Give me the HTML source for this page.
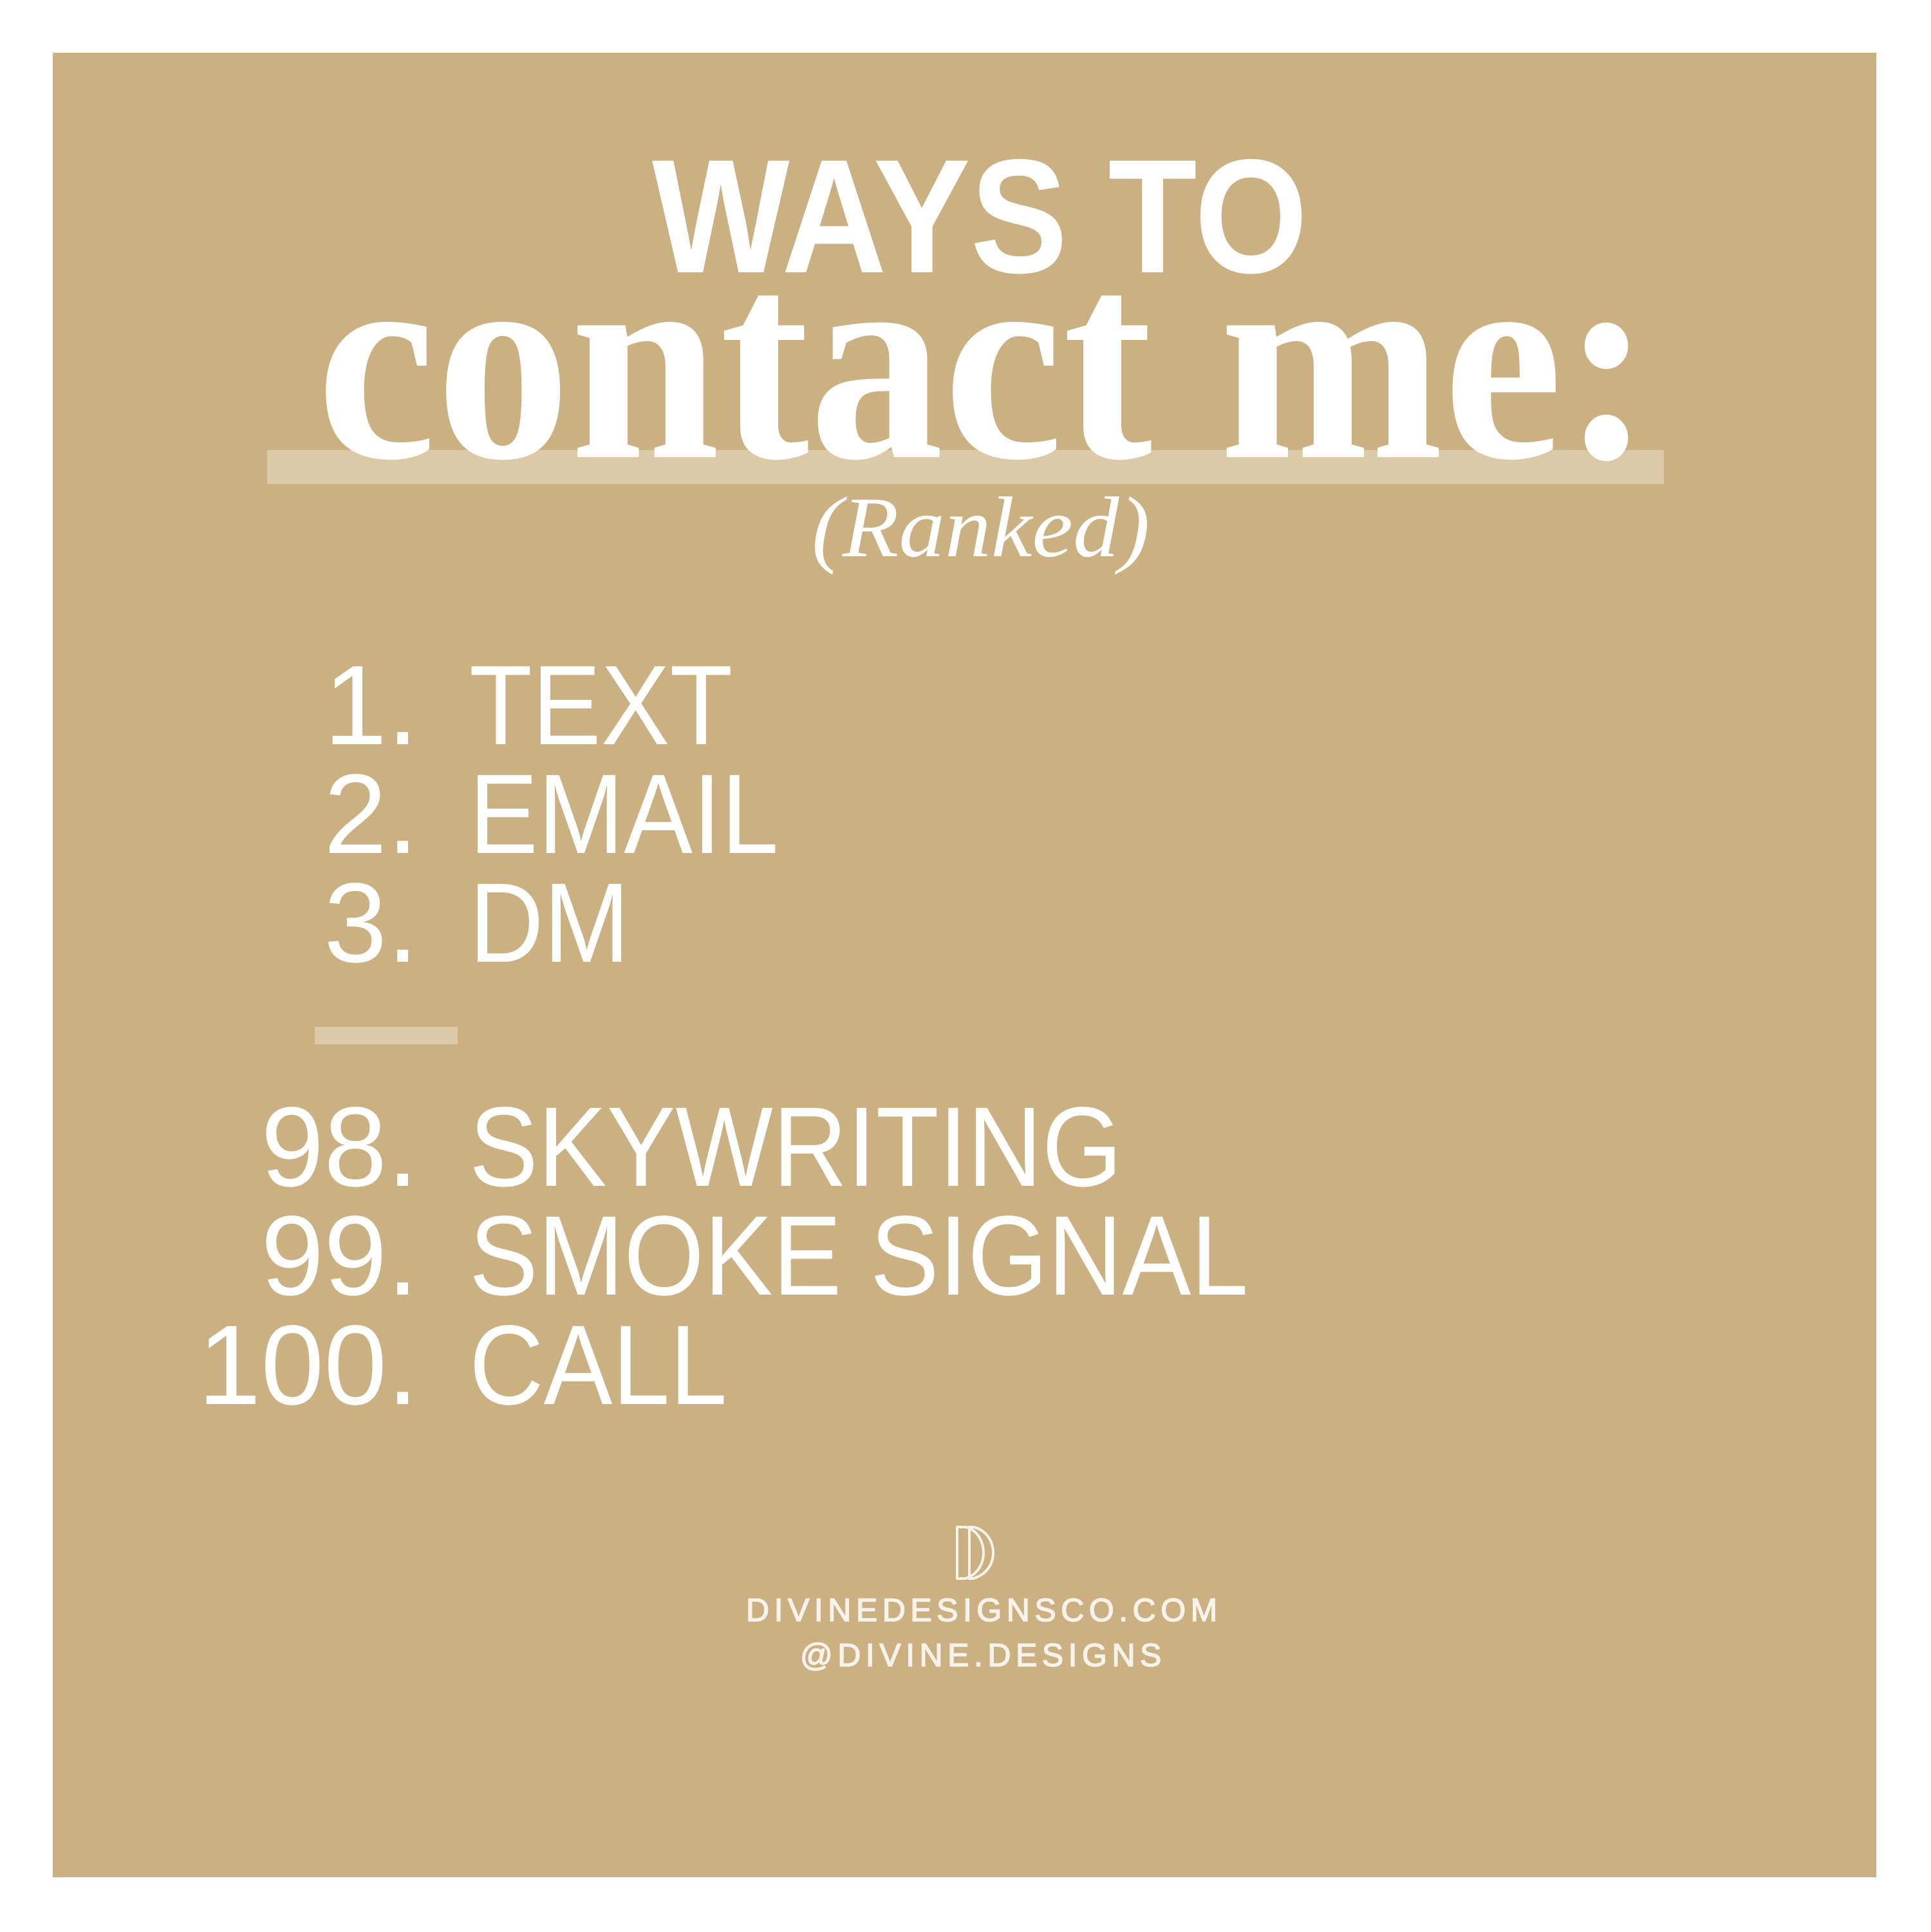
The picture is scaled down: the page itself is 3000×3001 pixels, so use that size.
<!DOCTYPE html>
<html><head><meta charset="utf-8"><style>
html,body{margin:0;padding:0;background:#fff;}
body{width:3000px;height:3001px;position:relative;overflow:hidden;}
.box{position:absolute;left:82px;top:82px;width:2833px;height:2834px;background:#cbb182;}
.abs{position:absolute;white-space:nowrap;color:#fff;}
.bar{position:absolute;background:#dcc9a8;}
.num{position:absolute;right:2350px;font-family:"Liberation Sans",sans-serif;font-size:176px;line-height:1;color:#fff;}
.item{position:absolute;left:729px;font-family:"Liberation Sans",sans-serif;font-size:176px;line-height:1;color:#fff;transform:scaleX(0.91);transform-origin:left;white-space:nowrap;}
</style></head><body>
<div class="box"></div>
<div class="abs" style="left:1013px;top:211px;font-family:'Liberation Sans',sans-serif;font-weight:bold;font-size:252px;line-height:1;transform:scaleX(0.898);transform-origin:left;">WAYS TO</div>
<div class="bar" style="left:415px;top:699px;width:2170px;height:53px;"></div>
<div class="abs" style="left:492px;top:338px;font-family:'Liberation Serif',serif;font-weight:bold;font-size:446px;line-height:1;transform:scaleX(0.936);transform-origin:left;">contact me:</div>
<div class="abs" style="left:1261px;top:752px;font-family:'Liberation Serif',serif;font-style:italic;font-size:134px;line-height:1;transform:scaleX(1.07);transform-origin:left;">(Ranked)</div>

<div class="num" style="top:1008px;">1.</div><div class="item" style="top:1008px;">TEXT</div>
<div class="num" style="top:1177px;">2.</div><div class="item" style="top:1177px;">EMAIL</div>
<div class="num" style="top:1346px;">3.</div><div class="item" style="top:1346px;">DM</div>
<div class="bar" style="left:489px;top:1595px;width:222px;height:27px;"></div>
<div class="num" style="top:1694px;">98.</div><div class="item" style="top:1694px;">SKYWRITING</div>
<div class="num" style="top:1863px;">99.</div><div class="item" style="top:1863px;">SMOKE SIGNAL</div>
<div class="num" style="top:2033px;">100.</div><div class="item" style="top:2033px;">CALL</div>

<svg class="abs" style="left:1480px;top:2366px;" width="72" height="92" viewBox="0 0 72 92">
<g fill="none" stroke="#f7f3ec" stroke-width="4">
<path d="M7 6 L7 86 L20 86 C38 80 48 64 48 46 C48 28 38 10 20 6 Z"/>
<path d="M26 6 L26 86 L32 86 C52 80 63 64 63 46 C63 28 52 10 32 6 Z"/>
</g></svg>
<div class="abs" style="left:1159px;top:2476px;font-family:'Liberation Sans',sans-serif;font-size:50px;line-height:1;color:#f7f3ec;letter-spacing:7.5px;-webkit-text-stroke:1.5px #f7f3ec;">DIVINEDESIGNSCO.COM</div>
<div class="abs" style="left:1243px;top:2546px;font-family:'Liberation Sans',sans-serif;font-size:50px;line-height:1;color:#f7f3ec;letter-spacing:7.5px;-webkit-text-stroke:1.5px #f7f3ec;">@DIVINE.DESIGNS</div>
</body></html>
